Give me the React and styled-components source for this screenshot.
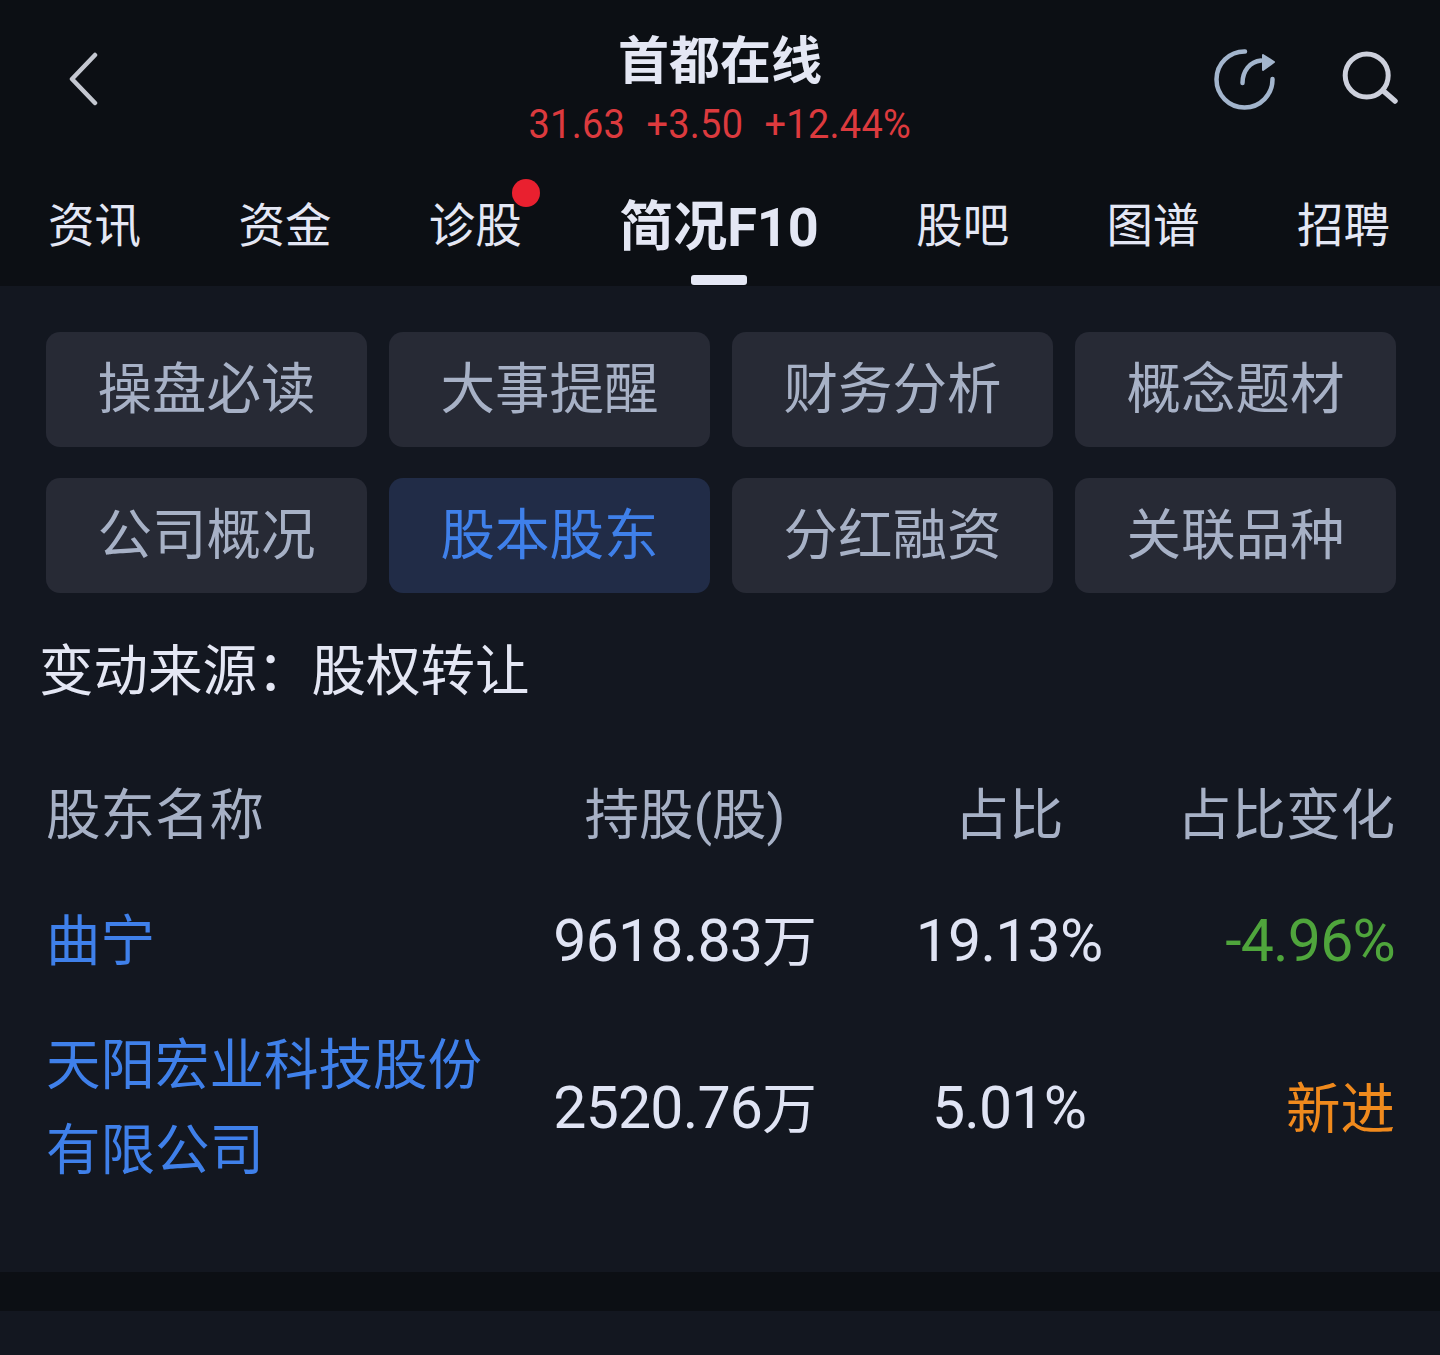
import React from "react"
import styled, { createGlobalStyle } from "styled-components"

const GlobalStyle = createGlobalStyle`
  html, body {
    margin: 0;
    padding: 0;
    background: #131720;
  }
  * {
    box-sizing: border-box;
  }
`

const cjk = `"Roboto", "Noto Sans CJK SC", sans-serif`

const Page = styled("div")`
  width: 1440px;
  height: 1355px;
  overflow: hidden;
  background: #131720;
  font-family: ${cjk};
`

const Top = styled("div")`
  height: 286px;
  background: #0c0f14;
`

const Header = styled("header")`
  display: flex;
  justify-content: space-between;
  align-items: flex-start;
  height: 170px;
  padding: 0 40px 0 68px;
`

const BackSlot = styled("div")`
  display: flex;
  align-items: center;
  width: 161px;
  height: 158px;
`

const ActionSlot = styled("div")`
  display: flex;
  align-items: center;
  justify-content: flex-end;
  gap: 63px;
  width: 189px;
  height: 158px;

  svg {
    flex-shrink: 0;
  }
`

const TitleBlock = styled("div")`
  display: flex;
  flex-direction: column;
  align-items: center;
  padding-top: 28px;
`

const Title = styled("h1")`
  margin: 0;
  font-size: 51px;
  line-height: 68px;
  font-weight: 700;
  color: #e4e7f4;
`

const Quote = styled("div")`
  display: flex;
  gap: 23px;
  margin-top: 3px;
  font-size: 41px;
  line-height: 50px;
  letter-spacing: 0.3px;
  color: #dc3a3e;
  transform: scaleX(0.925);
`

const Tabs = styled("nav")`
  display: flex;
  justify-content: space-between;
  align-items: flex-start;
  padding: 0 50px 0 48px;
`

const Tab = styled("div")`
  position: relative;
  font-size: ${(p) => p.$active ? 54 : 46.5}px;
  font-weight: ${(p) => p.$active ? 700 : 400};
  line-height: ${(p) => p.$active ? 115 : 113}px;
  height: 116px;
  color: #e4e7f4;
`

const Dot = styled("span")`
  position: absolute;
  top: 9px;
  right: -18px;
  width: 28px;
  height: 28px;
  border-radius: 50%;
  background: #e9202f;
`

const Underline = styled("span")`
  position: absolute;
  left: 72px;
  bottom: 1px;
  width: 56px;
  height: 10px;
  border-radius: 3px;
  background: #e4e7f4;
`

const Grid = styled("div")`
  display: grid;
  grid-template-columns: repeat(4, 321px);
  grid-auto-rows: 115px;
  gap: 31px 22px;
  padding: 46px 0 0 46px;
`

const Chip = styled("div")`
  display: flex;
  align-items: center;
  justify-content: center;
  padding-bottom: 10px;
  border-radius: 14px;
  font-size: 54.5px;
  background: ${(p) => p.$active ? "#212c47" : "#272a35"};
  color: ${(p) => p.$active ? "#3f80ea" : "#a7b1c6"};
`

const Source = styled("div")`
  padding: 41px 0 0 39px;
  font-size: 54.5px;
  line-height: 74px;
  color: #e4e7f4;
`

const Table = styled("div")`
  margin-top: 59px;
  padding: 0 45px 0 46px;
`

const Row = styled("div")`
  display: grid;
  grid-template-columns: 469px 340px 308px 1fr;
  align-items: center;
  min-height: ${(p) => p.$h}px;
`

const HeadCell = styled("div")`
  font-size: 54.5px;
  line-height: 84px;
  color: #a7b1c6;
  text-align: ${(p) => p.$align || "center"};
`

const Cell = styled("div")`
  font-size: 59px;
  line-height: 84px;
  letter-spacing: -0.8px;
  color: ${(p) => p.$color || "#e0e4f4"};
  text-align: ${(p) => p.$align || "center"};
`

const Unit = styled("span")`
  font-size: 54.5px;
  letter-spacing: 0;
`

const Name = styled("div")`
  max-width: 440px;
  font-size: 54.5px;
  line-height: 85px;
  color: #3f80ea;
`

const Band = styled("div")`
  height: 39px;
  margin-top: 75px;
  background: #0c0f14;
`

const BackIcon = () => (
  <svg width="32" height="54" viewBox="0 0 32 54" fill="none">
    <path d="M27 3 L4 27 L27 51" stroke="#c4c7d0" strokeWidth="4.5" strokeLinecap="round" strokeLinejoin="round" />
  </svg>
)

const RefreshIcon = () => (
  <svg width="66" height="66" viewBox="0 0 66 66" fill="none">
    <path d="M34 5.5 A28 28 0 1 0 61.5 33" stroke="#a3b5cd" strokeWidth="4.5" strokeLinecap="round" />
    <path d="M31.5 37 C31.5 25 39 15.5 50 14.5" stroke="#a3b5cd" strokeWidth="4.5" strokeLinecap="round" />
    <path d="M52 9 L63 16 L52 24 Z" fill="#a3b5cd" stroke="#a3b5cd" strokeWidth="2" strokeLinejoin="round" />
  </svg>
)

const SearchIcon = () => (
  <svg width="60" height="60" viewBox="0 0 60 60" fill="none">
    <circle cx="26.7" cy="26.5" r="21.5" stroke="#cdd0dc" strokeWidth="5" />
    <path d="M43.5 42 L55 52" stroke="#cdd0dc" strokeWidth="5.5" strokeLinecap="round" />
  </svg>
)

const chips = ["操盘必读", "大事提醒", "财务分析", "概念题材", "公司概况", "股本股东", "分红融资", "关联品种"]

const App = () => {
  return (
    <Page>
      <GlobalStyle />
      <Top>
        <Header>
          <BackSlot>
            <BackIcon />
          </BackSlot>
          <TitleBlock>
            <Title>首都在线</Title>
            <Quote>
              <span>31.63</span>
              <span>+3.50</span>
              <span>+12.44%</span>
            </Quote>
          </TitleBlock>
          <ActionSlot>
            <RefreshIcon />
            <SearchIcon />
          </ActionSlot>
        </Header>
        <Tabs>
          <Tab>资讯</Tab>
          <Tab>资金</Tab>
          <Tab>诊股<Dot /></Tab>
          <Tab $active>简况F10<Underline /></Tab>
          <Tab>股吧</Tab>
          <Tab>图谱</Tab>
          <Tab>招聘</Tab>
        </Tabs>
      </Top>
      <Grid>
        {chips.map((c) => (
          <Chip key={c} $active={c === "股本股东"}>{c}</Chip>
        ))}
      </Grid>
      <Source>变动来源：股权转让</Source>
      <Table>
        <Row $h={96}>
          <HeadCell $align="left">股东名称</HeadCell>
          <HeadCell>持股(股)</HeadCell>
          <HeadCell>占比</HeadCell>
          <HeadCell $align="right">占比变化</HeadCell>
        </Row>
        <Row $h={156}>
          <Name>曲宁</Name>
          <Cell>9618.83<Unit>万</Unit></Cell>
          <Cell>19.13%</Cell>
          <Cell $align="right" $color="#4fa53c">-4.96%</Cell>
        </Row>
        <Row $h={178}>
          <Name>天阳宏业科技股份有限公司</Name>
          <Cell>2520.76<Unit>万</Unit></Cell>
          <Cell>5.01%</Cell>
          <Cell $align="right" $color="#f08a1d"><Unit>新进</Unit></Cell>
        </Row>
      </Table>
      <Band />
    </Page>
  )
}

export default App
